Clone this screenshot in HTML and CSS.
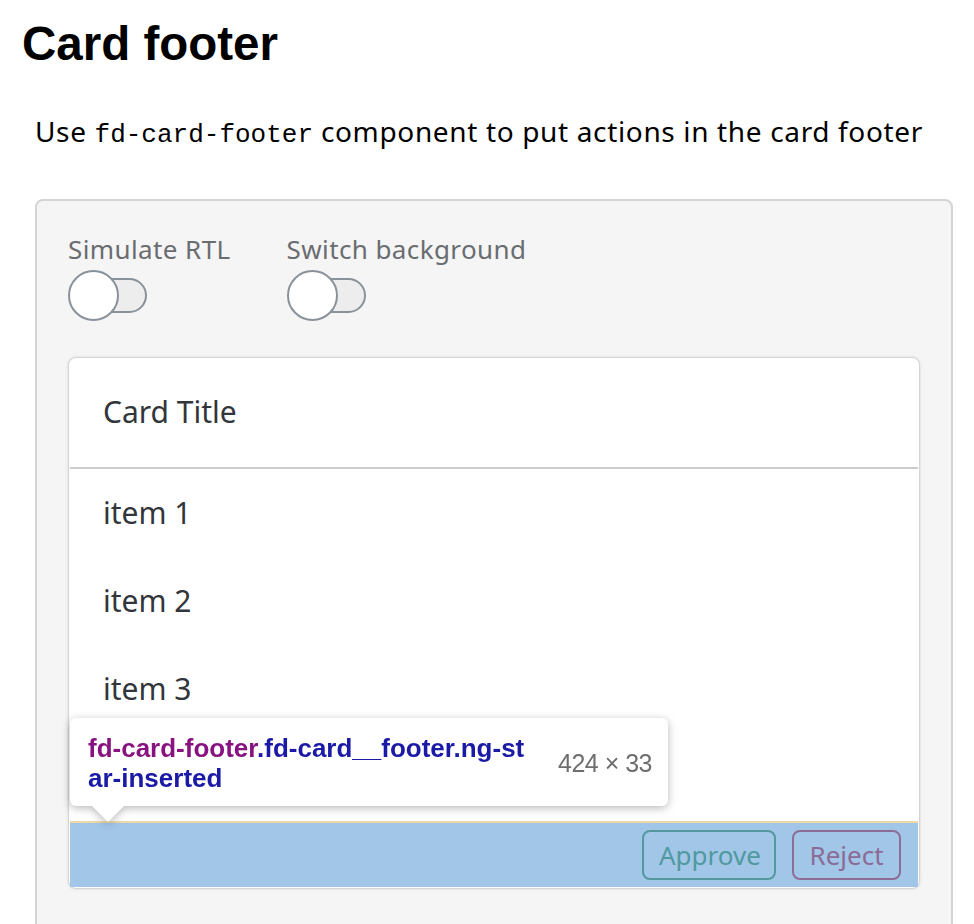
FILE: index.html
```html
<!DOCTYPE html>
<html>
<head>
<meta charset="utf-8">
<link rel="stylesheet" href="styles.css">
</head>
<body>
<div class="page">
  <h1 class="title">Card footer</h1>
  <p class="desc">Use <code class="code">fd-card-footer</code> component to put actions in the card footer</p>
  <div class="example">
    <div class="toggles">
      <div class="toggle-group">
        <span class="toggle-label">Simulate RTL</span>
        <span class="switch"><span class="knob"></span><span class="track"></span></span>
      </div>
      <div class="toggle-group">
        <span class="toggle-label">Switch background</span>
        <span class="switch"><span class="knob"></span><span class="track"></span></span>
      </div>
    </div>
    <div class="card">
      <div class="card-header"><span class="card-title">Card Title</span></div>
      <ul class="card-list">
        <li class="card-item">item 1</li>
        <li class="card-item">item 2</li>
        <li class="card-item">item 3</li>
      </ul>
      <div class="card-footer">
        <button class="btn btn-approve">Approve</button>
        <button class="btn btn-reject">Reject</button>
      </div>
      <div class="tooltip">
        <div class="tip-name"><span class="tip-tag">fd-card-footer</span><span class="tip-cls">.fd-card__footer.ng-st<br>ar-inserted</span></div>
        <div class="tip-size">424 × 33</div>
      </div>
    </div>
  </div>
</div>
</body>
</html>
```
FILE: styles.css
```css
html, body {
  margin: 0;
  padding: 0;
  background: #fff;
  overflow: hidden;
}
.page {
  padding: 0 21px 0 35px;
  font-family: "Noto Sans", "Liberation Sans", sans-serif;
}
.title {
  margin: 20px 0 0 -13px;
  font-family: "Liberation Sans", Arial, sans-serif;
  font-weight: bold;
  font-size: 47.5px;
  line-height: 47px;
  color: #000;
}
.desc {
  margin: 44px 0 0 0;
  font-size: 28px;
  line-height: 40px;
  letter-spacing: 0.65px;
  color: #000;
}
.code {
  font-family: "Liberation Mono", monospace;
  font-size: 26px;
  line-height: 26px;
  letter-spacing: 0;
}
.example {
  margin-top: 48px;
  border: 2px solid #d4d4d4;
  border-radius: 8px;
  background: #f5f5f5;
  padding: 33px 31px 80px 31px;
}
.toggles {
  display: flex;
  gap: 56px;
}
.toggle-group {
  display: flex;
  flex-direction: column;
  align-items: flex-start;
}
.toggle-label {
  font-size: 26px;
  line-height: 30px;
  letter-spacing: 0.4px;
  color: #6a6d70;
}
.switch {
  display: flex;
  align-items: center;
  margin-top: 6px;
  height: 51px;
}
.knob {
  width: 51px;
  height: 51px;
  box-sizing: border-box;
  border: 2px solid #89919a;
  border-radius: 50%;
  background: #fff;
  position: relative;
  z-index: 1;
}
.track {
  width: 56px;
  height: 35px;
  box-sizing: border-box;
  margin-left: -28px;
  border: 2px solid #89919a;
  border-radius: 18px;
  background: #ededed;
}
.card {
  position: relative;
  margin-top: 36px;
  background: #fff;
  border: 1px solid #d5d5d5;
  border-radius: 8px;
  box-shadow: 0 0 3px rgba(0,0,0,0.12);
}
.card-header {
  padding: 34px 33px 35px 33px;
  border-bottom: 2px solid #cccccc;
  margin: 0 1px;
}
.card-title {
  display: block;
  font-size: 30px;
  line-height: 40px;
  color: #32363a;
}
.card-list {
  list-style: none;
  margin: 0;
  padding: 0 0 88px 0;
}
.card-item {
  height: 88px;
  line-height: 88px;
  padding-left: 34px;
  font-size: 30px;
  color: #32363a;
}
.card-footer {
  display: flex;
  justify-content: flex-end;
  align-items: center;
  gap: 16px;
  height: 64px;
  padding-right: 17px;
  margin: 0 1px 1px 1px;
  background: #a2c6e8;
  border-top: 2px solid #ecd9a6;
}
.btn {
  height: 50px;
  padding: 0 15px;
  border-radius: 8px;
  background: transparent;
  font-family: "Noto Sans", sans-serif;
  font-size: 26px;
  line-height: 46px;
}
.btn-approve {
  border: 2px solid #53989e;
  color: #4f999f;
  width: 134px;
}
.btn-reject {
  border: 2px solid #8d6d98;
  color: #8b6c96;
  width: 109px;
}
.tooltip {
  position: absolute;
  left: 1px;
  top: 360px;
  width: 598px;
  height: 88px;
  box-sizing: border-box;
  padding: 15px 16px 13px 18px;
  display: flex;
  justify-content: space-between;
  align-items: center;
  background: #fff;
  border-radius: 6px;
  filter: drop-shadow(0 2px 4px rgba(0,0,0,0.28));
  font-family: "Liberation Sans", Arial, sans-serif;
}
.tooltip::after {
  content: "";
  position: absolute;
  left: 22px;
  top: 100%;
  border-left: 16px solid transparent;
  border-right: 16px solid transparent;
  border-top: 16px solid #fff;
}
.tip-name {
  font-weight: bold;
  font-size: 26px;
  line-height: 30px;
}
.tip-tag { color: #881280; }
.tip-cls { color: #1a1aa6; }
.tip-size {
  font-size: 25px;
  color: #6e6e6e;
  letter-spacing: -0.5px;
}
```
